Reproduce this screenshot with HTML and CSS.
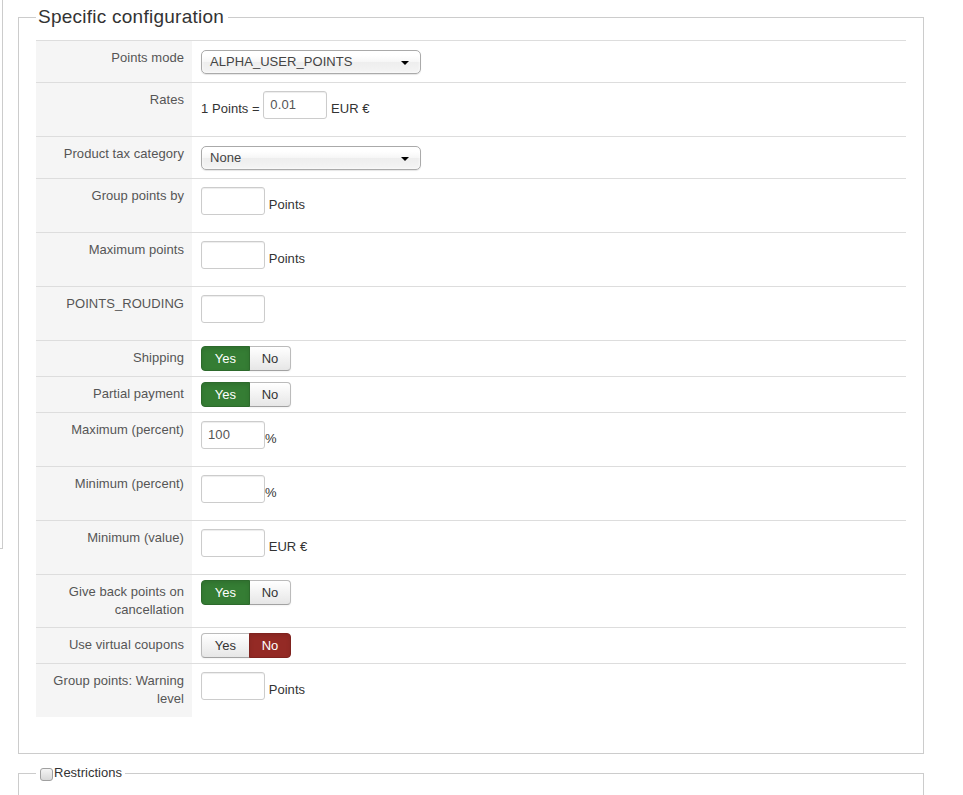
FILE: index.html
```html
<!DOCTYPE html>
<html>
<head>
<meta charset="utf-8">
<link rel="stylesheet" href="styles.css">
</head>
<body>
<div class="edge"><div class="edge-box"></div></div>
<div class="main">
  <fieldset class="panel">
    <legend class="panel-title">Specific configuration</legend>
    <table class="config">
      <tr>
        <td class="key">Points mode</td>
        <td class="val"><div class="select"><span>ALPHA_USER_POINTS</span><b class="caret"></b></div></td>
      </tr>
      <tr>
        <td class="key">Rates</td>
        <td class="val">1 Points = <input class="field" type="text" value="0.01"> EUR €</td>
      </tr>
      <tr>
        <td class="key">Product tax category</td>
        <td class="val"><div class="select"><span>None</span><b class="caret"></b></div></td>
      </tr>
      <tr>
        <td class="key">Group points by</td>
        <td class="val"><input class="field" type="text" value=""> Points</td>
      </tr>
      <tr>
        <td class="key">Maximum points</td>
        <td class="val"><input class="field" type="text" value=""> Points</td>
      </tr>
      <tr>
        <td class="key">POINTS_ROUDING</td>
        <td class="val"><input class="field" type="text" value=""></td>
      </tr>
      <tr>
        <td class="key">Shipping</td>
        <td class="val"><div class="toggle"><span class="btn btn-yes yes-on">Yes</span><span class="btn btn-no">No</span></div></td>
      </tr>
      <tr>
        <td class="key">Partial payment</td>
        <td class="val"><div class="toggle"><span class="btn btn-yes yes-on">Yes</span><span class="btn btn-no">No</span></div></td>
      </tr>
      <tr>
        <td class="key">Maximum (percent)</td>
        <td class="val"><input class="field" type="text" value="100">%</td>
      </tr>
      <tr>
        <td class="key">Minimum (percent)</td>
        <td class="val"><input class="field" type="text" value="">%</td>
      </tr>
      <tr>
        <td class="key">Minimum (value)</td>
        <td class="val"><input class="field" type="text" value=""> EUR €</td>
      </tr>
      <tr>
        <td class="key">Give back points on cancellation</td>
        <td class="val"><div class="toggle"><span class="btn btn-yes yes-on">Yes</span><span class="btn btn-no">No</span></div></td>
      </tr>
      <tr>
        <td class="key">Use virtual coupons</td>
        <td class="val"><div class="toggle"><span class="btn btn-yes">Yes</span><span class="btn btn-no no-on">No</span></div></td>
      </tr>
      <tr class="last">
        <td class="key">Group points: Warning level</td>
        <td class="val"><input class="field" type="text" value=""> Points</td>
      </tr>
    </table>
  </fieldset>
  <fieldset class="panel panel-second">
    <legend class="panel-small"><input class="check" type="checkbox">Restrictions</legend>
  </fieldset>
</div>
</body>
</html>
```

FILE: styles.css
```css
html, body {
  margin: 0;
  padding: 0;
  background: #fff;
}
body {
  display: flex;
  align-items: flex-start;
  font-family: "Liberation Sans", Arial, sans-serif;
  font-size: 13px;
  line-height: 18px;
  letter-spacing: 0.05px;
  color: #333;
  overflow: hidden;
  height: 795px;
}
.edge {
  width: 3px;
  flex: none;
}
.edge-box {
  width: 3px;
  height: 549px;
  box-sizing: border-box;
  border-right: 1px solid #ccc;
  border-bottom: 1px solid #ccc;
}
.main {
  margin-left: 15px;
  width: 906px;
  padding-top: 5px;
}
.panel {
  margin: 0;
  border: 1px solid #ccc;
  padding: 0 17px 36px 17px;
  min-width: 0;
}
.panel-title {
  font-size: 19px;
  line-height: 24px;
  letter-spacing: 0.25px;
  padding: 0 4px 0 2px;
  color: #333;
}
.config {
  margin-top: 11px;
  width: 870px;
  border-collapse: collapse;
  border-spacing: 0;
}
.config td {
  border-top: 1px solid #ddd;
  vertical-align: top;
  padding: 8px;
  line-height: 18px;
}
.config tr.last td {
  border-bottom: none;
}
.config td.key {
  width: 140px;
  background: #f5f5f5;
  text-align: right;
  color: #555;
}
.config td.val {
  padding-left: 9px;
  color: #333;
}
.select {
  position: relative;
  margin-top: 1px;
  width: 220px;
  height: 24px;
  box-sizing: border-box;
  border: 1px solid #aaa;
  border-radius: 5px;
  background: linear-gradient(#fff 20%, #f6f6f6 50%, #eee 52%, #f4f4f4 100%);
  box-shadow: inset 0 0 3px #fff, 0 1px 1px rgba(0,0,0,0.1);
  padding-left: 8px;
  line-height: 22px;
  color: #444;
}
.caret {
  position: absolute;
  right: 11px;
  top: 10px;
  width: 0;
  height: 0;
  border-left: 4px solid transparent;
  border-right: 4px solid transparent;
  border-top: 4px solid #000;
}
.field {
  width: 50px;
  height: 18px;
  padding: 4px 6px;
  margin: 0 0 9px 0;
  border: 1px solid #ccc;
  border-radius: 3px;
  box-shadow: inset 0 1px 1px rgba(0,0,0,0.075);
  font-family: "Liberation Sans", Arial, sans-serif;
  font-size: 13px;
  line-height: 18px;
  letter-spacing: 0.1px;
  color: #555;
  vertical-align: middle;
  outline: none;
  background: #fff;
}
.toggle {
  display: flex;
  margin: -3px 0;
}
.btn {
  display: block;
  box-sizing: border-box;
  height: 25px;
  padding: 3px 0;
  text-align: center;
  line-height: 17px;
  border: 1px solid #bbb;
  border-bottom-color: #a2a2a2;
  background: linear-gradient(#fff, #e6e6e6);
  color: #333;
  font-size: 13px;
  box-shadow: inset 0 1px 0 rgba(255,255,255,0.2), 0 1px 2px rgba(0,0,0,0.05);
}
.btn-yes {
  width: 49px;
  border-radius: 4px 0 0 4px;
}
.btn-no {
  width: 42px;
  margin-left: -1px;
  border-radius: 0 4px 4px 0;
}
.btn.yes-on {
  background: #357d34;
  border-color: #2d6a2c;
  color: #fff;
  box-shadow: inset 0 2px 4px rgba(0,0,0,0.1);
  position: relative;
}
.btn.no-on {
  background: #942a25;
  border-color: #7f231f;
  color: #fff;
  box-shadow: inset 0 2px 4px rgba(0,0,0,0.1);
  position: relative;
}
.panel-second {
  margin-top: 10px;
  height: 60px;
}
.panel-small {
  font-size: 13px;
  line-height: 18px;
  letter-spacing: 0;
  padding: 0 3px 0 2px;
  color: #333;
  display: flex;
  align-items: center;
}
.check {
  appearance: none;
  -webkit-appearance: none;
  width: 13px;
  height: 13px;
  margin: 3px 1px 0 2px;
  border: 1px solid #a0a0a0;
  border-radius: 3px;
  background: linear-gradient(#f4f4f4, #d8d8d8);
  box-sizing: border-box;
}
```
